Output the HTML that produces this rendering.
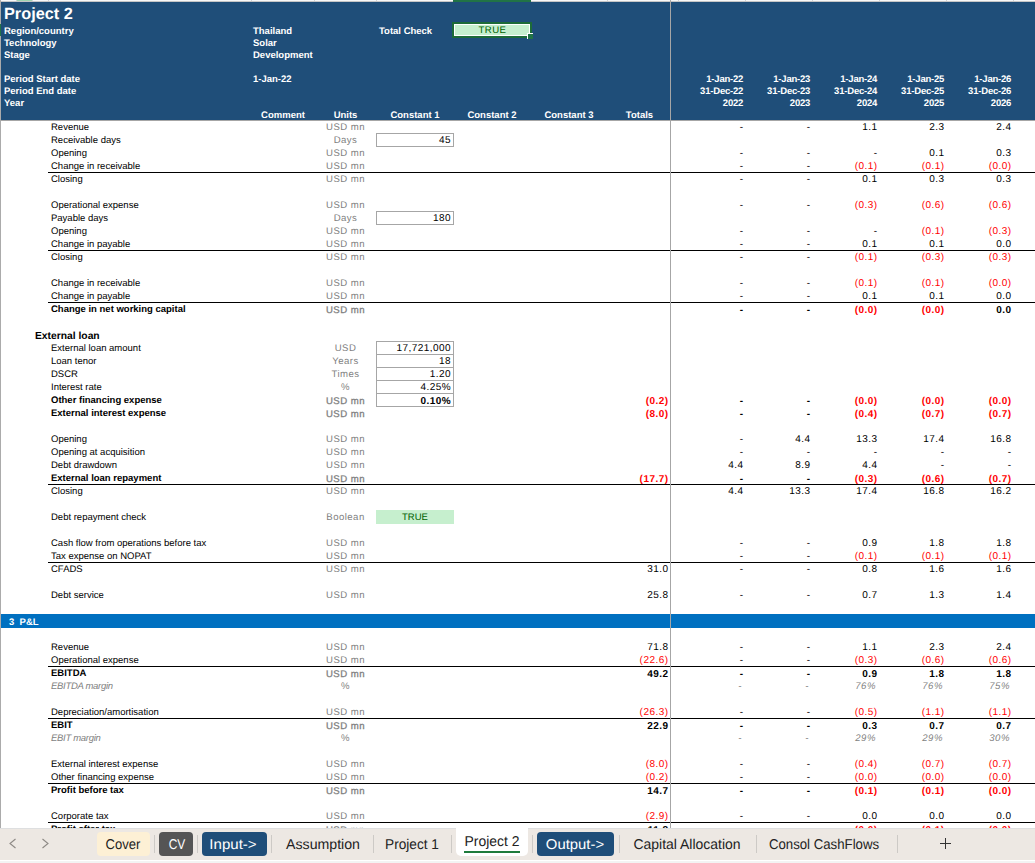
<!DOCTYPE html><html><head><meta charset="utf-8"><style>
*{margin:0;padding:0;box-sizing:border-box}
html,body{width:1035px;height:863px;overflow:hidden;background:#fff}
body{position:relative;font-family:"Liberation Sans",sans-serif;font-size:9.5px;color:#000;text-rendering:geometricPrecision}
.n{font-size:10px;letter-spacing:.45px}
.u{font-size:9.6px;letter-spacing:.45px}
.n.r{margin-right:-.45px}
.t{position:absolute;white-space:nowrap;margin-top:1px}
.dt{letter-spacing:-.2px}
.r{text-align:right}
.c{text-align:center}
.b{font-weight:bold}
.i{font-style:italic;color:#7f7f7f;letter-spacing:-.3px}
.n.i{font-size:9.6px;letter-spacing:.5px}
.w{color:#fff;font-weight:bold}
.g{color:#7f7f7f}
.red{color:#f00}
.ln{position:absolute;height:1px;background:#000}
.box{position:absolute;border:1px solid #a6a6a6;background:#fff}
.g.u.b{font-weight:normal;letter-spacing:.5px;-webkit-text-stroke:.3px #7f7f7f}
.tab{position:absolute;top:832px;height:24px;border-radius:4px}
.tt{position:absolute;width:200px;height:24px;font-size:14.2px;line-height:24px;text-align:center;white-space:nowrap}
.sep{position:absolute;top:835px;height:18px;width:1px;background:#cdcac6}
</style></head><body>

<div style="position:absolute;left:0;top:0;width:1035px;height:2px;background:#f8f8f8;border-bottom:1px solid #c6c6c6"></div>
<div style="position:absolute;left:16px;top:0;width:1px;height:1px;background:#d4d4d4"></div>
<div style="position:absolute;left:32px;top:0;width:1px;height:1px;background:#d4d4d4"></div>
<div style="position:absolute;left:48px;top:0;width:1px;height:1px;background:#d4d4d4"></div>
<div style="position:absolute;left:251px;top:0;width:1px;height:1px;background:#d4d4d4"></div>
<div style="position:absolute;left:314px;top:0;width:1px;height:1px;background:#d4d4d4"></div>
<div style="position:absolute;left:376px;top:0;width:1px;height:1px;background:#d4d4d4"></div>
<div style="position:absolute;left:453px;top:0;width:1px;height:1px;background:#d4d4d4"></div>
<div style="position:absolute;left:530px;top:0;width:1px;height:1px;background:#d4d4d4"></div>
<div style="position:absolute;left:607px;top:0;width:1px;height:1px;background:#d4d4d4"></div>
<div style="position:absolute;left:678px;top:0;width:1px;height:1px;background:#d4d4d4"></div>
<div style="position:absolute;left:745px;top:0;width:1px;height:1px;background:#d4d4d4"></div>
<div style="position:absolute;left:812px;top:0;width:1px;height:1px;background:#d4d4d4"></div>
<div style="position:absolute;left:879px;top:0;width:1px;height:1px;background:#d4d4d4"></div>
<div style="position:absolute;left:946px;top:0;width:1px;height:1px;background:#d4d4d4"></div>
<div style="position:absolute;left:1013px;top:0;width:1px;height:1px;background:#d4d4d4"></div>
<div style="position:absolute;left:17px;top:0;width:15px;height:1px;background:#9fd5b0"></div>
<div style="position:absolute;left:453px;top:0;width:78px;height:2px;background:#217346"></div>
<div style="position:absolute;left:1px;top:2px;width:1034px;height:118px;background:#1f4e79"></div>
<div style="position:absolute;left:0;top:0;width:1px;height:828px;background:#ababab"></div>
<div style="position:absolute;left:0;top:24px;width:1px;height:12px;background:#217346"></div>
<div class="t w" style="left:4px;top:2px;height:22px;line-height:22px;font-size:16.3px">Project 2</div>
<div class="t w" style="left:4px;top:25px;height:12px;line-height:12px">Region/country</div>
<div class="t w" style="left:253px;top:25px;height:12px;line-height:12px">Thailand</div>
<div class="t w" style="left:4px;top:37px;height:12px;line-height:12px">Technology</div>
<div class="t w" style="left:253px;top:37px;height:12px;line-height:12px">Solar</div>
<div class="t w" style="left:4px;top:49px;height:12px;line-height:12px">Stage</div>
<div class="t w" style="left:253px;top:49px;height:12px;line-height:12px">Development</div>
<div class="t w" style="left:4px;top:73px;height:12px;line-height:12px">Period Start date</div>
<div class="t w" style="left:253px;top:73px;height:12px;line-height:12px">1-Jan-22</div>
<div class="t w" style="left:4px;top:85px;height:12px;line-height:12px">Period End date</div>
<div class="t w" style="left:4px;top:97px;height:12px;line-height:12px">Year</div>
<div class="t w" style="left:379px;top:25px;height:12px;line-height:12px">Total Check</div>
<div style="position:absolute;left:452px;top:22px;width:80px;height:16px;border:2px solid #1d6b38;background:#c6efce"></div>
<div style="position:absolute;left:454px;top:24px;width:76px;height:12px;border:1px solid #fff"></div>
<div class="t c u" style="left:452.5px;width:80px;top:24px;height:12px;line-height:12px"><span style="color:#006100;font-weight:normal">TRUE</span></div>
<div style="position:absolute;left:527px;top:33px;width:6px;height:6px;background:#217346;border-left:1px solid #fff;border-top:1px solid #fff"></div>
<div class="t r w dt" style="right:291.79999999999995px;top:73px;height:12px;line-height:12px">1-Jan-22</div>
<div class="t r w dt" style="right:291.79999999999995px;top:85px;height:12px;line-height:12px">31-Dec-22</div>
<div class="t r w dt" style="right:291.79999999999995px;top:97px;height:12px;line-height:12px">2022</div>
<div class="t r w dt" style="right:224.79999999999995px;top:73px;height:12px;line-height:12px">1-Jan-23</div>
<div class="t r w dt" style="right:224.79999999999995px;top:85px;height:12px;line-height:12px">31-Dec-23</div>
<div class="t r w dt" style="right:224.79999999999995px;top:97px;height:12px;line-height:12px">2023</div>
<div class="t r w dt" style="right:157.79999999999995px;top:73px;height:12px;line-height:12px">1-Jan-24</div>
<div class="t r w dt" style="right:157.79999999999995px;top:85px;height:12px;line-height:12px">31-Dec-24</div>
<div class="t r w dt" style="right:157.79999999999995px;top:97px;height:12px;line-height:12px">2024</div>
<div class="t r w dt" style="right:90.79999999999995px;top:73px;height:12px;line-height:12px">1-Jan-25</div>
<div class="t r w dt" style="right:90.79999999999995px;top:85px;height:12px;line-height:12px">31-Dec-25</div>
<div class="t r w dt" style="right:90.79999999999995px;top:97px;height:12px;line-height:12px">2025</div>
<div class="t r w dt" style="right:23.799999999999955px;top:73px;height:12px;line-height:12px">1-Jan-26</div>
<div class="t r w dt" style="right:23.799999999999955px;top:85px;height:12px;line-height:12px">31-Dec-26</div>
<div class="t r w dt" style="right:23.799999999999955px;top:97px;height:12px;line-height:12px">2026</div>
<div class="t c w" style="left:243.0px;width:80px;top:109px;height:12px;line-height:12px">Comment</div>
<div class="t c w" style="left:305.5px;width:80px;top:109px;height:12px;line-height:12px">Units</div>
<div class="t c w" style="left:375.0px;width:80px;top:109px;height:12px;line-height:12px">Constant 1</div>
<div class="t c w" style="left:452.0px;width:80px;top:109px;height:12px;line-height:12px">Constant 2</div>
<div class="t c w" style="left:529.0px;width:80px;top:109px;height:12px;line-height:12px">Constant 3</div>
<div class="t c w" style="left:599.5px;width:80px;top:109px;height:12px;line-height:12px">Totals</div>
<div style="position:absolute;left:1px;top:120px;width:1034px;height:1px;background:#a6a6a6"></div>
<div style="position:absolute;left:1px;top:614px;width:1034px;height:14px;background:#0070c0"></div>
<div class="t w" style="left:9px;top:615px;height:14px;line-height:14px">3&nbsp;&nbsp;P&amp;L</div>
<div class="t " style="left:51px;top:120px;height:13px;line-height:13px">Revenue</div>
<div class="t c g u" style="left:305.5px;width:80px;top:120px;height:13px;line-height:13px">USD mn</div>
<div class="t r n " style="right:292px;top:120px;height:13px;line-height:13px">-</div>
<div class="t r n " style="right:225px;top:120px;height:13px;line-height:13px">-</div>
<div class="t r n " style="right:158px;top:120px;height:13px;line-height:13px">1.1</div>
<div class="t r n " style="right:91px;top:120px;height:13px;line-height:13px">2.3</div>
<div class="t r n " style="right:24px;top:120px;height:13px;line-height:13px">2.4</div>
<div class="t " style="left:51px;top:133px;height:13px;line-height:13px">Receivable days</div>
<div class="t c g u" style="left:305.5px;width:80px;top:133px;height:13px;line-height:13px">Days</div>
<div class="box" style="left:376px;top:133px;width:78px;height:14px"></div>
<div class="t r n " style="right:584.4px;top:133px;height:13px;line-height:13px">45</div>
<div class="t " style="left:51px;top:146px;height:13px;line-height:13px">Opening</div>
<div class="t c g u" style="left:305.5px;width:80px;top:146px;height:13px;line-height:13px">USD mn</div>
<div class="t r n " style="right:292px;top:146px;height:13px;line-height:13px">-</div>
<div class="t r n " style="right:225px;top:146px;height:13px;line-height:13px">-</div>
<div class="t r n " style="right:158px;top:146px;height:13px;line-height:13px">-</div>
<div class="t r n " style="right:91px;top:146px;height:13px;line-height:13px">0.1</div>
<div class="t r n " style="right:24px;top:146px;height:13px;line-height:13px">0.3</div>
<div class="ln" style="left:48px;top:172px;width:622px"></div>
<div class="ln" style="left:671px;top:172px;width:364px"></div>
<div class="t " style="left:51px;top:159px;height:13px;line-height:13px">Change in receivable</div>
<div class="t c g u" style="left:305.5px;width:80px;top:159px;height:13px;line-height:13px">USD mn</div>
<div class="t r n " style="right:292px;top:159px;height:13px;line-height:13px">-</div>
<div class="t r n " style="right:225px;top:159px;height:13px;line-height:13px">-</div>
<div class="t r n red " style="right:158px;top:159px;height:13px;line-height:13px">(0.1)</div>
<div class="t r n red " style="right:91px;top:159px;height:13px;line-height:13px">(0.1)</div>
<div class="t r n red " style="right:24px;top:159px;height:13px;line-height:13px">(0.0)</div>
<div class="t " style="left:51px;top:172px;height:13px;line-height:13px">Closing</div>
<div class="t c g u" style="left:305.5px;width:80px;top:172px;height:13px;line-height:13px">USD mn</div>
<div class="t r n " style="right:292px;top:172px;height:13px;line-height:13px">-</div>
<div class="t r n " style="right:225px;top:172px;height:13px;line-height:13px">-</div>
<div class="t r n " style="right:158px;top:172px;height:13px;line-height:13px">0.1</div>
<div class="t r n " style="right:91px;top:172px;height:13px;line-height:13px">0.3</div>
<div class="t r n " style="right:24px;top:172px;height:13px;line-height:13px">0.3</div>
<div class="t " style="left:51px;top:198px;height:13px;line-height:13px">Operational expense</div>
<div class="t c g u" style="left:305.5px;width:80px;top:198px;height:13px;line-height:13px">USD mn</div>
<div class="t r n " style="right:292px;top:198px;height:13px;line-height:13px">-</div>
<div class="t r n " style="right:225px;top:198px;height:13px;line-height:13px">-</div>
<div class="t r n red " style="right:158px;top:198px;height:13px;line-height:13px">(0.3)</div>
<div class="t r n red " style="right:91px;top:198px;height:13px;line-height:13px">(0.6)</div>
<div class="t r n red " style="right:24px;top:198px;height:13px;line-height:13px">(0.6)</div>
<div class="t " style="left:51px;top:211px;height:13px;line-height:13px">Payable days</div>
<div class="t c g u" style="left:305.5px;width:80px;top:211px;height:13px;line-height:13px">Days</div>
<div class="box" style="left:376px;top:211px;width:78px;height:14px"></div>
<div class="t r n " style="right:584.4px;top:211px;height:13px;line-height:13px">180</div>
<div class="t " style="left:51px;top:224px;height:13px;line-height:13px">Opening</div>
<div class="t c g u" style="left:305.5px;width:80px;top:224px;height:13px;line-height:13px">USD mn</div>
<div class="t r n " style="right:292px;top:224px;height:13px;line-height:13px">-</div>
<div class="t r n " style="right:225px;top:224px;height:13px;line-height:13px">-</div>
<div class="t r n " style="right:158px;top:224px;height:13px;line-height:13px">-</div>
<div class="t r n red " style="right:91px;top:224px;height:13px;line-height:13px">(0.1)</div>
<div class="t r n red " style="right:24px;top:224px;height:13px;line-height:13px">(0.3)</div>
<div class="ln" style="left:48px;top:250px;width:622px"></div>
<div class="ln" style="left:671px;top:250px;width:364px"></div>
<div class="t " style="left:51px;top:237px;height:13px;line-height:13px">Change in payable</div>
<div class="t c g u" style="left:305.5px;width:80px;top:237px;height:13px;line-height:13px">USD mn</div>
<div class="t r n " style="right:292px;top:237px;height:13px;line-height:13px">-</div>
<div class="t r n " style="right:225px;top:237px;height:13px;line-height:13px">-</div>
<div class="t r n " style="right:158px;top:237px;height:13px;line-height:13px">0.1</div>
<div class="t r n " style="right:91px;top:237px;height:13px;line-height:13px">0.1</div>
<div class="t r n " style="right:24px;top:237px;height:13px;line-height:13px">0.0</div>
<div class="t " style="left:51px;top:250px;height:13px;line-height:13px">Closing</div>
<div class="t c g u" style="left:305.5px;width:80px;top:250px;height:13px;line-height:13px">USD mn</div>
<div class="t r n " style="right:292px;top:250px;height:13px;line-height:13px">-</div>
<div class="t r n " style="right:225px;top:250px;height:13px;line-height:13px">-</div>
<div class="t r n red " style="right:158px;top:250px;height:13px;line-height:13px">(0.1)</div>
<div class="t r n red " style="right:91px;top:250px;height:13px;line-height:13px">(0.3)</div>
<div class="t r n red " style="right:24px;top:250px;height:13px;line-height:13px">(0.3)</div>
<div class="t " style="left:51px;top:276px;height:13px;line-height:13px">Change in receivable</div>
<div class="t c g u" style="left:305.5px;width:80px;top:276px;height:13px;line-height:13px">USD mn</div>
<div class="t r n " style="right:292px;top:276px;height:13px;line-height:13px">-</div>
<div class="t r n " style="right:225px;top:276px;height:13px;line-height:13px">-</div>
<div class="t r n red " style="right:158px;top:276px;height:13px;line-height:13px">(0.1)</div>
<div class="t r n red " style="right:91px;top:276px;height:13px;line-height:13px">(0.1)</div>
<div class="t r n red " style="right:24px;top:276px;height:13px;line-height:13px">(0.0)</div>
<div class="ln" style="left:48px;top:302px;width:622px"></div>
<div class="ln" style="left:671px;top:302px;width:364px"></div>
<div class="t " style="left:51px;top:289px;height:13px;line-height:13px">Change in payable</div>
<div class="t c g u" style="left:305.5px;width:80px;top:289px;height:13px;line-height:13px">USD mn</div>
<div class="t r n " style="right:292px;top:289px;height:13px;line-height:13px">-</div>
<div class="t r n " style="right:225px;top:289px;height:13px;line-height:13px">-</div>
<div class="t r n " style="right:158px;top:289px;height:13px;line-height:13px">0.1</div>
<div class="t r n " style="right:91px;top:289px;height:13px;line-height:13px">0.1</div>
<div class="t r n " style="right:24px;top:289px;height:13px;line-height:13px">0.0</div>
<div class="t b" style="left:51px;top:302px;height:13px;line-height:13px">Change in net working capital</div>
<div class="t c g u b" style="left:305.5px;width:80px;top:303px;height:13px;line-height:13px">USD mn</div>
<div class="t r n b" style="right:292px;top:303px;height:13px;line-height:13px">-</div>
<div class="t r n b" style="right:225px;top:303px;height:13px;line-height:13px">-</div>
<div class="t r n red b" style="right:158px;top:303px;height:13px;line-height:13px">(0.0)</div>
<div class="t r n red b" style="right:91px;top:303px;height:13px;line-height:13px">(0.0)</div>
<div class="t r n b" style="right:24px;top:303px;height:13px;line-height:13px">0.0</div>
<div class="t b" style="left:35px;top:329px;height:13px;line-height:13px;font-size:10.3px">External loan</div>
<div class="t " style="left:51px;top:341px;height:13px;line-height:13px">External loan amount</div>
<div class="t c g u" style="left:305.5px;width:80px;top:341px;height:13px;line-height:13px">USD</div>
<div class="box" style="left:376px;top:341px;width:78px;height:14px"></div>
<div class="t r n " style="right:584.4px;top:341px;height:13px;line-height:13px">17,721,000</div>
<div class="t " style="left:51px;top:354px;height:13px;line-height:13px">Loan tenor</div>
<div class="t c g u" style="left:305.5px;width:80px;top:354px;height:13px;line-height:13px">Years</div>
<div class="box" style="left:376px;top:354px;width:78px;height:14px"></div>
<div class="t r n " style="right:584.4px;top:354px;height:13px;line-height:13px">18</div>
<div class="t " style="left:51px;top:367px;height:13px;line-height:13px">DSCR</div>
<div class="t c g u" style="left:305.5px;width:80px;top:367px;height:13px;line-height:13px">Times</div>
<div class="box" style="left:376px;top:367px;width:78px;height:14px"></div>
<div class="t r n " style="right:584.4px;top:367px;height:13px;line-height:13px">1.20</div>
<div class="t " style="left:51px;top:380px;height:13px;line-height:13px">Interest rate</div>
<div class="t c g u" style="left:305.5px;width:80px;top:380px;height:13px;line-height:13px">%</div>
<div class="box" style="left:376px;top:380px;width:78px;height:14px"></div>
<div class="t r n " style="right:584.4px;top:380px;height:13px;line-height:13px">4.25%</div>
<div class="t b" style="left:51px;top:393px;height:13px;line-height:13px">Other financing expense</div>
<div class="t c g u b" style="left:305.5px;width:80px;top:394px;height:13px;line-height:13px">USD mn</div>
<div class="box" style="left:376px;top:393px;width:78px;height:14px"></div>
<div class="t r n b" style="right:584.4px;top:394px;height:13px;line-height:13px">0.10%</div>
<div class="t r n red b" style="right:367px;top:394px;height:13px;line-height:13px">(0.2)</div>
<div class="t r n b" style="right:292px;top:394px;height:13px;line-height:13px">-</div>
<div class="t r n b" style="right:225px;top:394px;height:13px;line-height:13px">-</div>
<div class="t r n red b" style="right:158px;top:394px;height:13px;line-height:13px">(0.0)</div>
<div class="t r n red b" style="right:91px;top:394px;height:13px;line-height:13px">(0.0)</div>
<div class="t r n red b" style="right:24px;top:394px;height:13px;line-height:13px">(0.0)</div>
<div class="t b" style="left:51px;top:406px;height:13px;line-height:13px">External interest expense</div>
<div class="t c g u b" style="left:305.5px;width:80px;top:407px;height:13px;line-height:13px">USD mn</div>
<div class="t r n red b" style="right:367px;top:407px;height:13px;line-height:13px">(8.0)</div>
<div class="t r n b" style="right:292px;top:407px;height:13px;line-height:13px">-</div>
<div class="t r n b" style="right:225px;top:407px;height:13px;line-height:13px">-</div>
<div class="t r n red b" style="right:158px;top:407px;height:13px;line-height:13px">(0.4)</div>
<div class="t r n red b" style="right:91px;top:407px;height:13px;line-height:13px">(0.7)</div>
<div class="t r n red b" style="right:24px;top:407px;height:13px;line-height:13px">(0.7)</div>
<div class="t " style="left:51px;top:432px;height:13px;line-height:13px">Opening</div>
<div class="t c g u" style="left:305.5px;width:80px;top:432px;height:13px;line-height:13px">USD mn</div>
<div class="t r n " style="right:292px;top:432px;height:13px;line-height:13px">-</div>
<div class="t r n " style="right:225px;top:432px;height:13px;line-height:13px">4.4</div>
<div class="t r n " style="right:158px;top:432px;height:13px;line-height:13px">13.3</div>
<div class="t r n " style="right:91px;top:432px;height:13px;line-height:13px">17.4</div>
<div class="t r n " style="right:24px;top:432px;height:13px;line-height:13px">16.8</div>
<div class="t " style="left:51px;top:445px;height:13px;line-height:13px">Opening at acquisition</div>
<div class="t c g u" style="left:305.5px;width:80px;top:445px;height:13px;line-height:13px">USD mn</div>
<div class="t r n " style="right:292px;top:445px;height:13px;line-height:13px">-</div>
<div class="t r n " style="right:225px;top:445px;height:13px;line-height:13px">-</div>
<div class="t r n " style="right:158px;top:445px;height:13px;line-height:13px">-</div>
<div class="t r n " style="right:91px;top:445px;height:13px;line-height:13px">-</div>
<div class="t r n " style="right:24px;top:445px;height:13px;line-height:13px">-</div>
<div class="t " style="left:51px;top:458px;height:13px;line-height:13px">Debt drawdown</div>
<div class="t c g u" style="left:305.5px;width:80px;top:458px;height:13px;line-height:13px">USD mn</div>
<div class="t r n " style="right:292px;top:458px;height:13px;line-height:13px">4.4</div>
<div class="t r n " style="right:225px;top:458px;height:13px;line-height:13px">8.9</div>
<div class="t r n " style="right:158px;top:458px;height:13px;line-height:13px">4.4</div>
<div class="t r n " style="right:91px;top:458px;height:13px;line-height:13px">-</div>
<div class="t r n " style="right:24px;top:458px;height:13px;line-height:13px">-</div>
<div class="ln" style="left:48px;top:484px;width:622px"></div>
<div class="ln" style="left:671px;top:484px;width:364px"></div>
<div class="t b" style="left:51px;top:471px;height:13px;line-height:13px">External loan repayment</div>
<div class="t c g u b" style="left:305.5px;width:80px;top:472px;height:13px;line-height:13px">USD mn</div>
<div class="t r n red b" style="right:367px;top:472px;height:13px;line-height:13px">(17.7)</div>
<div class="t r n b" style="right:292px;top:472px;height:13px;line-height:13px">-</div>
<div class="t r n b" style="right:225px;top:472px;height:13px;line-height:13px">-</div>
<div class="t r n red b" style="right:158px;top:472px;height:13px;line-height:13px">(0.3)</div>
<div class="t r n red b" style="right:91px;top:472px;height:13px;line-height:13px">(0.6)</div>
<div class="t r n red b" style="right:24px;top:472px;height:13px;line-height:13px">(0.7)</div>
<div class="t " style="left:51px;top:484px;height:13px;line-height:13px">Closing</div>
<div class="t c g u" style="left:305.5px;width:80px;top:484px;height:13px;line-height:13px">USD mn</div>
<div class="t r n " style="right:292px;top:484px;height:13px;line-height:13px">4.4</div>
<div class="t r n " style="right:225px;top:484px;height:13px;line-height:13px">13.3</div>
<div class="t r n " style="right:158px;top:484px;height:13px;line-height:13px">17.4</div>
<div class="t r n " style="right:91px;top:484px;height:13px;line-height:13px">16.8</div>
<div class="t r n " style="right:24px;top:484px;height:13px;line-height:13px">16.2</div>
<div class="t " style="left:51px;top:510px;height:13px;line-height:13px">Debt repayment check</div>
<div class="t c g u" style="left:305.5px;width:80px;top:510px;height:13px;line-height:13px">Boolean</div>
<div style="position:absolute;left:376px;top:510px;width:78px;height:14px;background:#c6efce"></div>
<div class="t c " style="left:375.0px;width:80px;top:510px;height:13px;line-height:13px"><span style="color:#006100">TRUE</span></div>
<div class="t " style="left:51px;top:536px;height:13px;line-height:13px">Cash flow from operations before tax</div>
<div class="t c g u" style="left:305.5px;width:80px;top:536px;height:13px;line-height:13px">USD mn</div>
<div class="t r n " style="right:292px;top:536px;height:13px;line-height:13px">-</div>
<div class="t r n " style="right:225px;top:536px;height:13px;line-height:13px">-</div>
<div class="t r n " style="right:158px;top:536px;height:13px;line-height:13px">0.9</div>
<div class="t r n " style="right:91px;top:536px;height:13px;line-height:13px">1.8</div>
<div class="t r n " style="right:24px;top:536px;height:13px;line-height:13px">1.8</div>
<div class="ln" style="left:48px;top:562px;width:622px"></div>
<div class="ln" style="left:671px;top:562px;width:364px"></div>
<div class="t " style="left:51px;top:549px;height:13px;line-height:13px">Tax expense on NOPAT</div>
<div class="t c g u" style="left:305.5px;width:80px;top:549px;height:13px;line-height:13px">USD mn</div>
<div class="t r n " style="right:292px;top:549px;height:13px;line-height:13px">-</div>
<div class="t r n " style="right:225px;top:549px;height:13px;line-height:13px">-</div>
<div class="t r n red " style="right:158px;top:549px;height:13px;line-height:13px">(0.1)</div>
<div class="t r n red " style="right:91px;top:549px;height:13px;line-height:13px">(0.1)</div>
<div class="t r n red " style="right:24px;top:549px;height:13px;line-height:13px">(0.1)</div>
<div class="t " style="left:51px;top:562px;height:13px;line-height:13px">CFADS</div>
<div class="t c g u" style="left:305.5px;width:80px;top:562px;height:13px;line-height:13px">USD mn</div>
<div class="t r n " style="right:367px;top:562px;height:13px;line-height:13px">31.0</div>
<div class="t r n " style="right:292px;top:562px;height:13px;line-height:13px">-</div>
<div class="t r n " style="right:225px;top:562px;height:13px;line-height:13px">-</div>
<div class="t r n " style="right:158px;top:562px;height:13px;line-height:13px">0.8</div>
<div class="t r n " style="right:91px;top:562px;height:13px;line-height:13px">1.6</div>
<div class="t r n " style="right:24px;top:562px;height:13px;line-height:13px">1.6</div>
<div class="t " style="left:51px;top:588px;height:13px;line-height:13px">Debt service</div>
<div class="t c g u" style="left:305.5px;width:80px;top:588px;height:13px;line-height:13px">USD mn</div>
<div class="t r n " style="right:367px;top:588px;height:13px;line-height:13px">25.8</div>
<div class="t r n " style="right:292px;top:588px;height:13px;line-height:13px">-</div>
<div class="t r n " style="right:225px;top:588px;height:13px;line-height:13px">-</div>
<div class="t r n " style="right:158px;top:588px;height:13px;line-height:13px">0.7</div>
<div class="t r n " style="right:91px;top:588px;height:13px;line-height:13px">1.3</div>
<div class="t r n " style="right:24px;top:588px;height:13px;line-height:13px">1.4</div>
<div class="t " style="left:51px;top:640px;height:13px;line-height:13px">Revenue</div>
<div class="t c g u" style="left:305.5px;width:80px;top:640px;height:13px;line-height:13px">USD mn</div>
<div class="t r n " style="right:367px;top:640px;height:13px;line-height:13px">71.8</div>
<div class="t r n " style="right:292px;top:640px;height:13px;line-height:13px">-</div>
<div class="t r n " style="right:225px;top:640px;height:13px;line-height:13px">-</div>
<div class="t r n " style="right:158px;top:640px;height:13px;line-height:13px">1.1</div>
<div class="t r n " style="right:91px;top:640px;height:13px;line-height:13px">2.3</div>
<div class="t r n " style="right:24px;top:640px;height:13px;line-height:13px">2.4</div>
<div class="ln" style="left:48px;top:666px;width:622px"></div>
<div class="ln" style="left:671px;top:666px;width:364px"></div>
<div class="t " style="left:51px;top:653px;height:13px;line-height:13px">Operational expense</div>
<div class="t c g u" style="left:305.5px;width:80px;top:653px;height:13px;line-height:13px">USD mn</div>
<div class="t r n red " style="right:367px;top:653px;height:13px;line-height:13px">(22.6)</div>
<div class="t r n " style="right:292px;top:653px;height:13px;line-height:13px">-</div>
<div class="t r n " style="right:225px;top:653px;height:13px;line-height:13px">-</div>
<div class="t r n red " style="right:158px;top:653px;height:13px;line-height:13px">(0.3)</div>
<div class="t r n red " style="right:91px;top:653px;height:13px;line-height:13px">(0.6)</div>
<div class="t r n red " style="right:24px;top:653px;height:13px;line-height:13px">(0.6)</div>
<div class="t b" style="left:51px;top:666px;height:13px;line-height:13px">EBITDA</div>
<div class="t c g u b" style="left:305.5px;width:80px;top:667px;height:13px;line-height:13px">USD mn</div>
<div class="t r n b" style="right:367px;top:667px;height:13px;line-height:13px">49.2</div>
<div class="t r n b" style="right:292px;top:667px;height:13px;line-height:13px">-</div>
<div class="t r n b" style="right:225px;top:667px;height:13px;line-height:13px">-</div>
<div class="t r n b" style="right:158px;top:667px;height:13px;line-height:13px">0.9</div>
<div class="t r n b" style="right:91px;top:667px;height:13px;line-height:13px">1.8</div>
<div class="t r n b" style="right:24px;top:667px;height:13px;line-height:13px">1.8</div>
<div class="t i" style="left:51px;top:679px;height:13px;line-height:13px">EBITDA margin</div>
<div class="t c g u" style="left:305.5px;width:80px;top:679px;height:13px;line-height:13px">%</div>
<div class="t r n i" style="right:293.5px;top:679px;height:13px;line-height:13px">-</div>
<div class="t r n i" style="right:226.5px;top:679px;height:13px;line-height:13px">-</div>
<div class="t r n i" style="right:159.5px;top:679px;height:13px;line-height:13px">76%</div>
<div class="t r n i" style="right:92.5px;top:679px;height:13px;line-height:13px">76%</div>
<div class="t r n i" style="right:25.5px;top:679px;height:13px;line-height:13px">75%</div>
<div class="ln" style="left:48px;top:718px;width:622px"></div>
<div class="ln" style="left:671px;top:718px;width:364px"></div>
<div class="t " style="left:51px;top:705px;height:13px;line-height:13px">Depreciation/amortisation</div>
<div class="t c g u" style="left:305.5px;width:80px;top:705px;height:13px;line-height:13px">USD mn</div>
<div class="t r n red " style="right:367px;top:705px;height:13px;line-height:13px">(26.3)</div>
<div class="t r n " style="right:292px;top:705px;height:13px;line-height:13px">-</div>
<div class="t r n " style="right:225px;top:705px;height:13px;line-height:13px">-</div>
<div class="t r n red " style="right:158px;top:705px;height:13px;line-height:13px">(0.5)</div>
<div class="t r n red " style="right:91px;top:705px;height:13px;line-height:13px">(1.1)</div>
<div class="t r n red " style="right:24px;top:705px;height:13px;line-height:13px">(1.1)</div>
<div class="t b" style="left:51px;top:718px;height:13px;line-height:13px">EBIT</div>
<div class="t c g u b" style="left:305.5px;width:80px;top:719px;height:13px;line-height:13px">USD mn</div>
<div class="t r n b" style="right:367px;top:719px;height:13px;line-height:13px">22.9</div>
<div class="t r n b" style="right:292px;top:719px;height:13px;line-height:13px">-</div>
<div class="t r n b" style="right:225px;top:719px;height:13px;line-height:13px">-</div>
<div class="t r n b" style="right:158px;top:719px;height:13px;line-height:13px">0.3</div>
<div class="t r n b" style="right:91px;top:719px;height:13px;line-height:13px">0.7</div>
<div class="t r n b" style="right:24px;top:719px;height:13px;line-height:13px">0.7</div>
<div class="t i" style="left:51px;top:731px;height:13px;line-height:13px">EBIT margin</div>
<div class="t c g u" style="left:305.5px;width:80px;top:731px;height:13px;line-height:13px">%</div>
<div class="t r n i" style="right:293.5px;top:731px;height:13px;line-height:13px">-</div>
<div class="t r n i" style="right:226.5px;top:731px;height:13px;line-height:13px">-</div>
<div class="t r n i" style="right:159.5px;top:731px;height:13px;line-height:13px">29%</div>
<div class="t r n i" style="right:92.5px;top:731px;height:13px;line-height:13px">29%</div>
<div class="t r n i" style="right:25.5px;top:731px;height:13px;line-height:13px">30%</div>
<div class="t " style="left:51px;top:757px;height:13px;line-height:13px">External interest expense</div>
<div class="t c g u" style="left:305.5px;width:80px;top:757px;height:13px;line-height:13px">USD mn</div>
<div class="t r n red " style="right:367px;top:757px;height:13px;line-height:13px">(8.0)</div>
<div class="t r n " style="right:292px;top:757px;height:13px;line-height:13px">-</div>
<div class="t r n " style="right:225px;top:757px;height:13px;line-height:13px">-</div>
<div class="t r n red " style="right:158px;top:757px;height:13px;line-height:13px">(0.4)</div>
<div class="t r n red " style="right:91px;top:757px;height:13px;line-height:13px">(0.7)</div>
<div class="t r n red " style="right:24px;top:757px;height:13px;line-height:13px">(0.7)</div>
<div class="ln" style="left:48px;top:783px;width:622px"></div>
<div class="ln" style="left:671px;top:783px;width:364px"></div>
<div class="t " style="left:51px;top:770px;height:13px;line-height:13px">Other financing expense</div>
<div class="t c g u" style="left:305.5px;width:80px;top:770px;height:13px;line-height:13px">USD mn</div>
<div class="t r n red " style="right:367px;top:770px;height:13px;line-height:13px">(0.2)</div>
<div class="t r n " style="right:292px;top:770px;height:13px;line-height:13px">-</div>
<div class="t r n " style="right:225px;top:770px;height:13px;line-height:13px">-</div>
<div class="t r n red " style="right:158px;top:770px;height:13px;line-height:13px">(0.0)</div>
<div class="t r n red " style="right:91px;top:770px;height:13px;line-height:13px">(0.0)</div>
<div class="t r n red " style="right:24px;top:770px;height:13px;line-height:13px">(0.0)</div>
<div class="t b" style="left:51px;top:783px;height:13px;line-height:13px">Profit before tax</div>
<div class="t c g u b" style="left:305.5px;width:80px;top:784px;height:13px;line-height:13px">USD mn</div>
<div class="t r n b" style="right:367px;top:784px;height:13px;line-height:13px">14.7</div>
<div class="t r n b" style="right:292px;top:784px;height:13px;line-height:13px">-</div>
<div class="t r n b" style="right:225px;top:784px;height:13px;line-height:13px">-</div>
<div class="t r n red b" style="right:158px;top:784px;height:13px;line-height:13px">(0.1)</div>
<div class="t r n red b" style="right:91px;top:784px;height:13px;line-height:13px">(0.1)</div>
<div class="t r n red b" style="right:24px;top:784px;height:13px;line-height:13px">(0.0)</div>
<div class="ln" style="left:48px;top:822px;width:622px"></div>
<div class="ln" style="left:671px;top:822px;width:364px"></div>
<div class="t " style="left:51px;top:809px;height:13px;line-height:13px">Corporate tax</div>
<div class="t c g u" style="left:305.5px;width:80px;top:809px;height:13px;line-height:13px">USD mn</div>
<div class="t r n red " style="right:367px;top:809px;height:13px;line-height:13px">(2.9)</div>
<div class="t r n " style="right:292px;top:809px;height:13px;line-height:13px">-</div>
<div class="t r n " style="right:225px;top:809px;height:13px;line-height:13px">-</div>
<div class="t r n " style="right:158px;top:809px;height:13px;line-height:13px">0.0</div>
<div class="t r n " style="right:91px;top:809px;height:13px;line-height:13px">0.0</div>
<div class="t r n " style="right:24px;top:809px;height:13px;line-height:13px">0.0</div>
<div class="t b" style="left:51px;top:822px;height:13px;line-height:13px">Profit after tax</div>
<div class="t c g u b" style="left:305.5px;width:80px;top:823px;height:13px;line-height:13px">USD mn</div>
<div class="t r n b" style="right:367px;top:823px;height:13px;line-height:13px">11.8</div>
<div class="t r n b" style="right:292px;top:823px;height:13px;line-height:13px">-</div>
<div class="t r n b" style="right:225px;top:823px;height:13px;line-height:13px">-</div>
<div class="t r n red b" style="right:158px;top:823px;height:13px;line-height:13px">(0.0)</div>
<div class="t r n red b" style="right:91px;top:823px;height:13px;line-height:13px">(0.1)</div>
<div class="t r n red b" style="right:24px;top:823px;height:13px;line-height:13px">(0.0)</div>
<div style="position:absolute;left:670px;top:0px;width:1px;height:828px;background:#a6a6a6"></div>
<div style="position:absolute;left:0;top:828px;width:1035px;height:32px;background:#ede8e3"></div>
<div style="position:absolute;left:0;top:860px;width:1035px;height:3px;background:#f3f3f3;border-top:1px solid #fff"></div>
<div style="position:absolute;left:0;top:828px;width:456px;height:1px;background:#dedfe0"></div>
<div style="position:absolute;left:528px;top:828px;width:507px;height:1px;background:#dedfe0"></div>
<svg style="position:absolute;left:8px;top:838px" width="10" height="12" viewBox="0 0 10 12"><polyline points="7.5,1 2,5.5 7.5,10" fill="none" stroke="#8d8985" stroke-width="1.1"/></svg>
<svg style="position:absolute;left:40px;top:838px" width="10" height="12" viewBox="0 0 10 12"><polyline points="2.5,1 8,5.5 2.5,10" fill="none" stroke="#8d8985" stroke-width="1.1"/></svg>
<div class="tab" style="left:97px;width:53px;background:#fdf0d5"></div>
<div class="tab" style="left:159px;width:34px;background:#555"></div>
<div class="tab" style="left:202px;width:65px;background:#1f4e79"></div>
<div class="tab" style="left:537px;width:77px;background:#1f4e79"></div>
<div class="sep" style="left:154px"></div>
<div class="sep" style="left:197px"></div>
<div class="sep" style="left:271px"></div>
<div class="sep" style="left:373px"></div>
<div class="sep" style="left:451px"></div>
<div class="sep" style="left:532px"></div>
<div class="sep" style="left:619px"></div>
<div class="sep" style="left:756px"></div>
<div class="sep" style="left:897px"></div>
<div style="position:absolute;left:456px;top:828px;width:72px;height:28px;background:#fff;border-radius:0 0 5px 5px"></div>
<div style="position:absolute;left:464px;top:851px;width:56px;height:2px;background:#1e7b3c"></div>
<div class="tt" style="left:23px;top:833px;color:#222;transform:scaleX(0.919)">Cover</div>
<div class="tt" style="left:76.69999999999999px;top:833px;color:#fff;transform:scaleX(0.842)">CV</div>
<div class="tt" style="left:133px;top:833px;color:#fff;transform:scaleX(1.062)">Input-&gt;</div>
<div class="tt" style="left:222.5px;top:833px;color:#222;transform:scaleX(0.997)">Assumption</div>
<div class="tt" style="left:311.5px;top:833px;color:#222;transform:scaleX(0.962)">Project 1</div>
<div class="tt" style="left:392px;top:830px;color:#222;transform:scaleX(0.980)">Project 2</div>
<div class="tt" style="left:475px;top:833px;color:#fff;transform:scaleX(1.049)">Output-&gt;</div>
<div class="tt" style="left:587px;top:833px;color:#222;transform:scaleX(0.984)">Capital Allocation</div>
<div class="tt" style="left:724px;top:833px;color:#222;transform:scaleX(0.931)">Consol CashFlows</div>
<div style="position:absolute;left:945px;top:838px;width:1px;height:11px;background:#333"></div>
<div style="position:absolute;left:940px;top:843px;width:11px;height:1px;background:#333"></div>
</body></html>
